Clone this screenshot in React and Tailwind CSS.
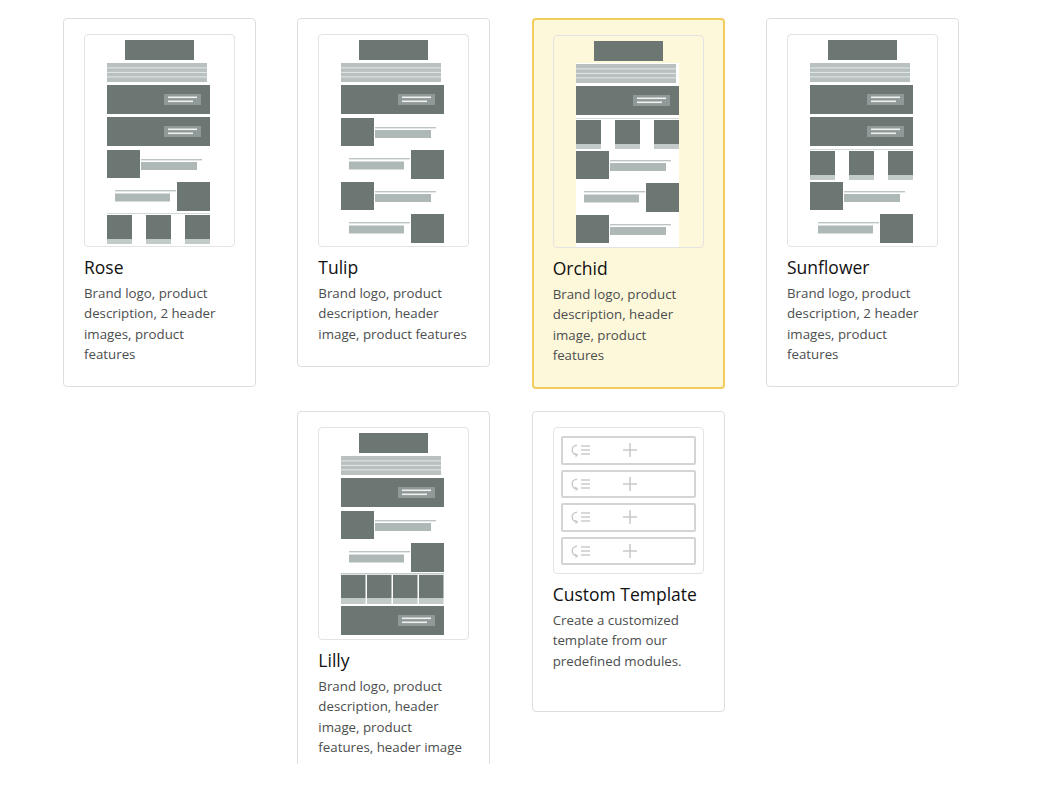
import React from 'react';

const DARK = '#6c7673';
const LIGHT = '#aeb8b7';
const THIN = '#bcc5c4';

function Header({ y }) {
    return (
        <g>
            <rect x="22" y={y} width="103" height="29" fill={DARK} />
            <rect x="79" y={y + 9} width="37" height="11" fill="#8f9997" />
            <rect x="83" y={y + 11.5} width="29" height="1.6" fill="#eef1f0" />
            <rect x="83" y={y + 15.5} width="25" height="1.6" fill="#eef1f0" />
        </g>
    );
}

function FeatLeft({ y }) {
    return (
        <g>
            <rect x="22" y={y + 1} width="33" height="28" fill={DARK} />
            <rect x="56" y={y + 10} width="61" height="1.4" fill={THIN} />
            <rect x="56" y={y + 13} width="56" height="8" fill={LIGHT} />
        </g>
    );
}

function FeatRight({ y }) {
    return (
        <g>
            <rect x="92" y={y + 1} width="33" height="29" fill={DARK} />
            <rect x="30" y={y + 9} width="61" height="1.4" fill={THIN} />
            <rect x="30" y={y + 12.5} width="55" height="8" fill={LIGHT} />
        </g>
    );
}

function Cols3({ y }) {
    return (
        <g>
            <rect x="22" y={y} width="103" height="1" fill="#d3d9d8" />
            {[22, 61, 100].map((x) => (
                <g key={x}>
                    <rect x={x} y={y + 2} width="25" height="24" fill={DARK} />
                    <rect x={x} y={y + 26} width="25" height="5" fill="#c3cbca" />
                </g>
            ))}
        </g>
    );
}

function Cols4({ y }) {
    return (
        <g>
            <rect x="22" y={y - 1} width="103" height="1.5" fill="#c3cbca" />
            {[22, 48, 74, 100].map((x) => (
                <g key={x}>
                    <rect x={x} y={y + 1} width="24.5" height="23" fill={DARK} />
                    <rect x={x} y={y + 24} width="24.5" height="6" fill="#c3cbca" />
                </g>
            ))}
        </g>
    );
}

const MODULES = { header: Header, featL: FeatLeft, featR: FeatRight, cols3: Cols3, cols4: Cols4 };

function Thumb({ modules }) {
    return (
        <div className="w-[151px] h-[213px] border border-[#e3e3e3] rounded-[4px]">
            <svg width="149" height="211" viewBox="0 0 149 211" className="block">
                <rect x="22" y="27" width="103" height="184" fill="#ffffff" />
                <rect x="40" y="5" width="69" height="20" fill={DARK} />
                <rect x="22" y="28" width="100" height="19" fill="#b8c1c0" />
                <rect x="22" y="32.4" width="100" height="1" fill="#e4e9e8" />
                <rect x="22" y="36.9" width="100" height="1" fill="#e4e9e8" />
                <rect x="22" y="41.4" width="100" height="1" fill="#e4e9e8" />
                {modules.map((m, i) => {
                    const M = MODULES[m];
                    return <M key={i} y={50 + i * 32} />;
                })}
            </svg>
        </div>
    );
}

function ModuleIcon() {
    return (
        <svg width="24" height="14" viewBox="0 0 24 14" className="block">
            <path d="M7 2.2 A4.8 4.8 0 0 0 7 11.8" fill="none" stroke="#c8c8c8" strokeWidth="1.4" />
            <path d="M5 10.2 L7.4 11.8 L5.6 13.6" fill="none" stroke="#c8c8c8" strokeWidth="1.2" />
            <line x1="11" y1="3" x2="20" y2="3" stroke="#c8c8c8" strokeWidth="1.4" />
            <line x1="11" y1="7" x2="20" y2="7" stroke="#c8c8c8" strokeWidth="1.4" />
            <line x1="11" y1="11" x2="20" y2="11" stroke="#c8c8c8" strokeWidth="1.4" />
        </svg>
    );
}

function CustomThumb() {
    return (
        <div className="w-[151px] h-[147px] border border-[#e3e3e3] rounded-[4px] px-[7px] py-[8px] flex flex-col gap-[5px]">
            {[0, 1, 2, 3].map((i) => (
                <div key={i} className="h-[29px] border-2 border-[#d4d4d4] rounded-[2px] flex items-center pl-[7px]">
                    <ModuleIcon />
                    <svg width="16" height="16" viewBox="0 0 16 16" className="block ml-[28px]">
                        <line x1="8" y1="1" x2="8" y2="15" stroke="#c8c8c8" strokeWidth="1.5" />
                        <line x1="1" y1="8" x2="15" y2="8" stroke="#c8c8c8" strokeWidth="1.5" />
                    </svg>
                </div>
            ))}
        </div>
    );
}

const templates = [
    { name: 'Rose', lines: ['Brand logo, product', 'description, 2 header', 'images, product', 'features'], modules: ['header', 'header', 'featL', 'featR', 'cols3'] },
    { name: 'Tulip', lines: ['Brand logo, product', 'description, header', 'image, product features'], modules: ['header', 'featL', 'featR', 'featL', 'featR'] },
    { name: 'Orchid', selected: true, lines: ['Brand logo, product', 'description, header', 'image, product', 'features'], modules: ['header', 'cols3', 'featL', 'featR', 'featL'] },
    { name: 'Sunflower', lines: ['Brand logo, product', 'description, 2 header', 'images, product', 'features'], modules: ['header', 'header', 'cols3', 'featL', 'featR'] },
    { name: 'Lilly', lines: ['Brand logo, product', 'description, header', 'image, product', 'features, header image'], modules: ['header', 'featL', 'featR', 'cols4', 'header'] },
    { name: 'Custom Template', custom: true, lines: ['Create a customized', 'template from our', 'predefined modules.'] },
];

function Card({ t }) {
    const base = t.selected
        ? 'border-2 border-[#f2cd5e] bg-[#fef8da] px-[19px] pt-[15px] pb-[22px]'
        : 'border border-[#dedede] bg-white px-[20px] pt-[15px] pb-[22px]';
    return (
        <div className={`w-[193px] rounded-[4px] shrink-0 ${base} ${t.custom ? 'h-[301px]' : ''}`}>
            {t.custom ? <CustomThumb /> : <Thumb modules={t.modules} />}
            <div className="mt-[8px] text-[17.5px] leading-[24px] text-[#111111] font-medium">{t.name}</div>
            <div className="mt-[4px] text-[13.3px] leading-[20.3px] text-[#4b4e4e]">
                {t.lines.map((l) => (
                    <div key={l} className="whitespace-nowrap">{l}</div>
                ))}
            </div>
        </div>
    );
}

export default function App() {
    return (
        <div className="w-[1041px] h-[787px] bg-white" style={{ fontFamily: '"Open Sans", "Noto Sans", sans-serif' }}>
            <div className="h-[764px] overflow-hidden">
                <div className="ml-[63px] pt-[18px] w-[896px] flex flex-wrap justify-center items-start gap-x-[41.33px] gap-y-[22px]">
                    {templates.map((t) => (
                        <Card key={t.name} t={t} />
                    ))}
                </div>
            </div>
        </div>
    );
}
